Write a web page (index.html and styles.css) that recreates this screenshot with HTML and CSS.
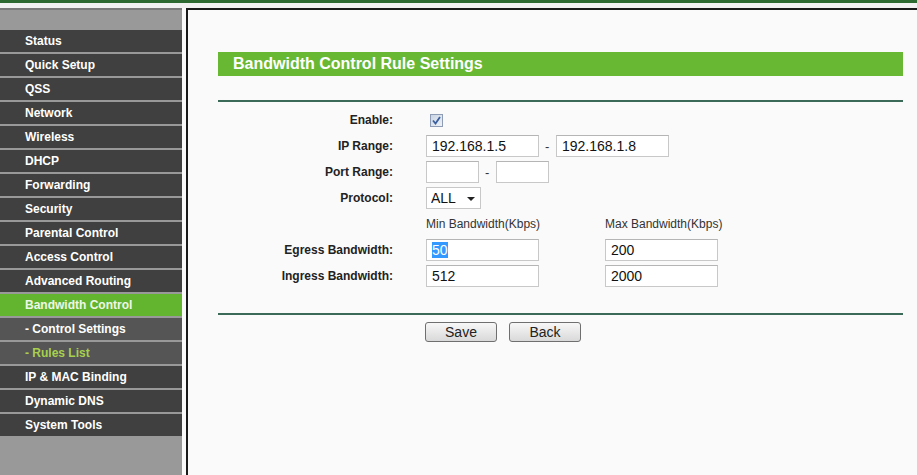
FILE: index.html
```html
<!DOCTYPE html>
<html lang="en">
<head>
    <meta charset="UTF-8">
    <title>Bandwidth Control Rule Settings</title>
    <link rel="stylesheet" href="styles.css">
</head>
<body>
    <div class="topbar"></div>

    <div class="frame">
        <div class="sidebar">
            <div class="menu-head"></div>
            <ul class="menu">
                <li class="menu-item">Status</li>
                <li class="menu-item">Quick Setup</li>
                <li class="menu-item">QSS</li>
                <li class="menu-item">Network</li>
                <li class="menu-item">Wireless</li>
                <li class="menu-item">DHCP</li>
                <li class="menu-item">Forwarding</li>
                <li class="menu-item">Security</li>
                <li class="menu-item">Parental Control</li>
                <li class="menu-item">Access Control</li>
                <li class="menu-item">Advanced Routing</li>
                <li class="menu-item active">Bandwidth Control</li>
                <li class="menu-item sub">- Control Settings</li>
                <li class="menu-item sub current">- Rules List</li>
                <li class="menu-item">IP &amp; MAC Binding</li>
                <li class="menu-item">Dynamic DNS</li>
                <li class="menu-item">System Tools</li>
            </ul>
        </div>

        <div class="main">
            <h1 class="title-bar">Bandwidth Control Rule Settings</h1>
            <div class="rule"></div>

            <form class="rule-form" action="#" method="post">
                <label class="form-label">Enable:</label>
                <div class="form-field">
                    <span class="checkbox">
                        <svg width="9" height="9" viewBox="0 0 9 9"><path d="M1 4.5 L3.5 7.5 L8 1" fill="none" stroke="#3b5f9c" stroke-width="1.8"/></svg>
                    </span>
                </div>

                <label class="form-label">IP Range:</label>
                <div class="form-field">
                    <input type="text" class="field wide" value="192.168.1.5">
                    <span class="dash">-</span>
                    <input type="text" class="field wide" value="192.168.1.8">
                </div>

                <label class="form-label">Port Range:</label>
                <div class="form-field">
                    <input type="text" class="field short" value="">
                    <span class="dash">-</span>
                    <input type="text" class="field short" value="">
                </div>

                <label class="form-label">Protocol:</label>
                <div class="form-field">
                    <span class="select-box">
                        <select class="select">
                            <option>ALL</option>
                            <option>TCP</option>
                            <option>UDP</option>
                        </select>
                    </span>
                </div>

                <span class="form-label"></span>
                <div class="form-field pair">
                    <span class="col-head">Min Bandwidth(Kbps)</span>
                    <span class="col-head">Max Bandwidth(Kbps)</span>
                </div>

                <label class="form-label">Egress Bandwidth:</label>
                <div class="form-field pair">
                    <input type="text" class="field wide" id="egressMin" value="50">
                    <input type="text" class="field wide" value="200">
                </div>

                <label class="form-label">Ingress Bandwidth:</label>
                <div class="form-field pair">
                    <input type="text" class="field wide" value="512">
                    <input type="text" class="field wide" value="2000">
                </div>
            </form>

            <div class="rule lower"></div>

            <div class="buttons">
                <button type="button" class="btn">Save</button>
                <button type="button" class="btn">Back</button>
            </div>
        </div>
    </div>

    <script>
        // the egress value is shown selected, as when the page loads
        const egress = document.getElementById('egressMin');
        egress.focus();
        egress.select();
    </script>
</body>
</html>
```

FILE: styles.css
```css
* {
    margin: 0;
    padding: 0;
    box-sizing: border-box;
}

body {
    background-color: #fafafa;
    font-family: 'Liberation Sans', Arial, sans-serif;
    color: #222;
    font-size: 12px;
}

.topbar {
    height: 8px;
    border-top: 3px solid #2d6a31;
    border-bottom: 5px solid #f2f2f2;
    background-color: #86c15e;
}

.frame {
    display: flex;
    min-height: calc(100vh - 8px);
}

.sidebar {
    width: 182px;
    margin-right: 4px;
    background-color: #999999;
    border-top: 2px solid #7a7a7a;
}

.menu-head {
    height: 20px;
}

.menu {
    list-style: none;
}

.menu-item {
    height: 24px;
    line-height: 22px;
    padding-left: 25px;
    border-bottom: 2px solid #999999;
    background-color: #404040;
    color: #ffffff;
    font-weight: bold;
    font-size: 12px;
}

.menu-item.active {
    background-color: #63b530;
    color: #eef7e6;
}

.menu-item.sub {
    background-color: #555555;
}

.menu-item.current {
    color: #a8d04e;
}

.main {
    flex: 1;
    border-left: 2px solid #1a1a1a;
    border-top: 2px solid #1a1a1a;
    padding: 42px 14px 0 30px;
}

.title-bar {
    height: 24px;
    line-height: 24px;
    padding-left: 15px;
    background-color: #68b834;
    color: #ffffff;
    font-size: 16px;
    font-weight: bold;
}

.rule {
    height: 2px;
    margin-top: 24px;
    background-color: #3c6a58;
}

.rule.lower {
    margin-top: 24px;
}

.rule-form {
    display: grid;
    grid-template-columns: 175px 1fr;
    grid-auto-rows: 26px;
    column-gap: 33px;
    align-items: center;
    margin-top: 5px;
}

.form-label {
    text-align: right;
    font-weight: bold;
    color: #222;
}

.form-field {
    display: flex;
    align-items: center;
    gap: 6px;
}

.form-field.pair {
    display: grid;
    grid-template-columns: 113px 113px;
    column-gap: 66px;
}

.field {
    height: 22px;
    border: 1px solid #c8c8c8;
    border-top-color: #b5b5b5;
    background-color: #ffffff;
    padding-left: 5px;
    font-family: 'Liberation Sans', Arial, sans-serif;
    font-size: 14px;
    color: #111;
}

.field:focus {
    outline: none;
}

.field::selection {
    background-color: #3399ff;
    color: #ffffff;
}

.field.wide {
    width: 113px;
}

.field.short {
    width: 53px;
}

.dash {
    width: 5px;
    font-size: 13px;
    color: #333;
}

.checkbox {
    display: flex;
    align-items: center;
    justify-content: center;
    width: 13px;
    height: 13px;
    margin-left: 4px;
    border: 1px solid #8e9db5;
    background: linear-gradient(135deg, #c9d4e3, #eef2f7);
}

.select-box {
    position: relative;
    display: block;
    width: 55px;
    height: 22px;
}

.select-box::after {
    content: "";
    position: absolute;
    right: 6px;
    top: 10px;
    border-left: 4px solid transparent;
    border-right: 4px solid transparent;
    border-top: 4px solid #222;
    pointer-events: none;
}

.select {
    appearance: none;
    -webkit-appearance: none;
    width: 100%;
    height: 100%;
    border: 1px solid #c8c8c8;
    border-radius: 0;
    background-color: #ffffff;
    padding-left: 4px;
    font-family: 'Liberation Sans', Arial, sans-serif;
    font-size: 14px;
    color: #111;
}

.col-head {
    font-size: 12px;
    color: #333;
    white-space: nowrap;
}

.buttons {
    display: flex;
    gap: 12px;
    margin-top: 7px;
    padding-left: 207px;
}

.btn {
    width: 72px;
    height: 20px;
    border: 1px solid #6f6f6f;
    border-radius: 3px;
    background: linear-gradient(#f7f7f7, #d9d9d9);
    font-family: 'Liberation Sans', Arial, sans-serif;
    font-size: 14px;
    color: #222;
    cursor: pointer;
}
```
